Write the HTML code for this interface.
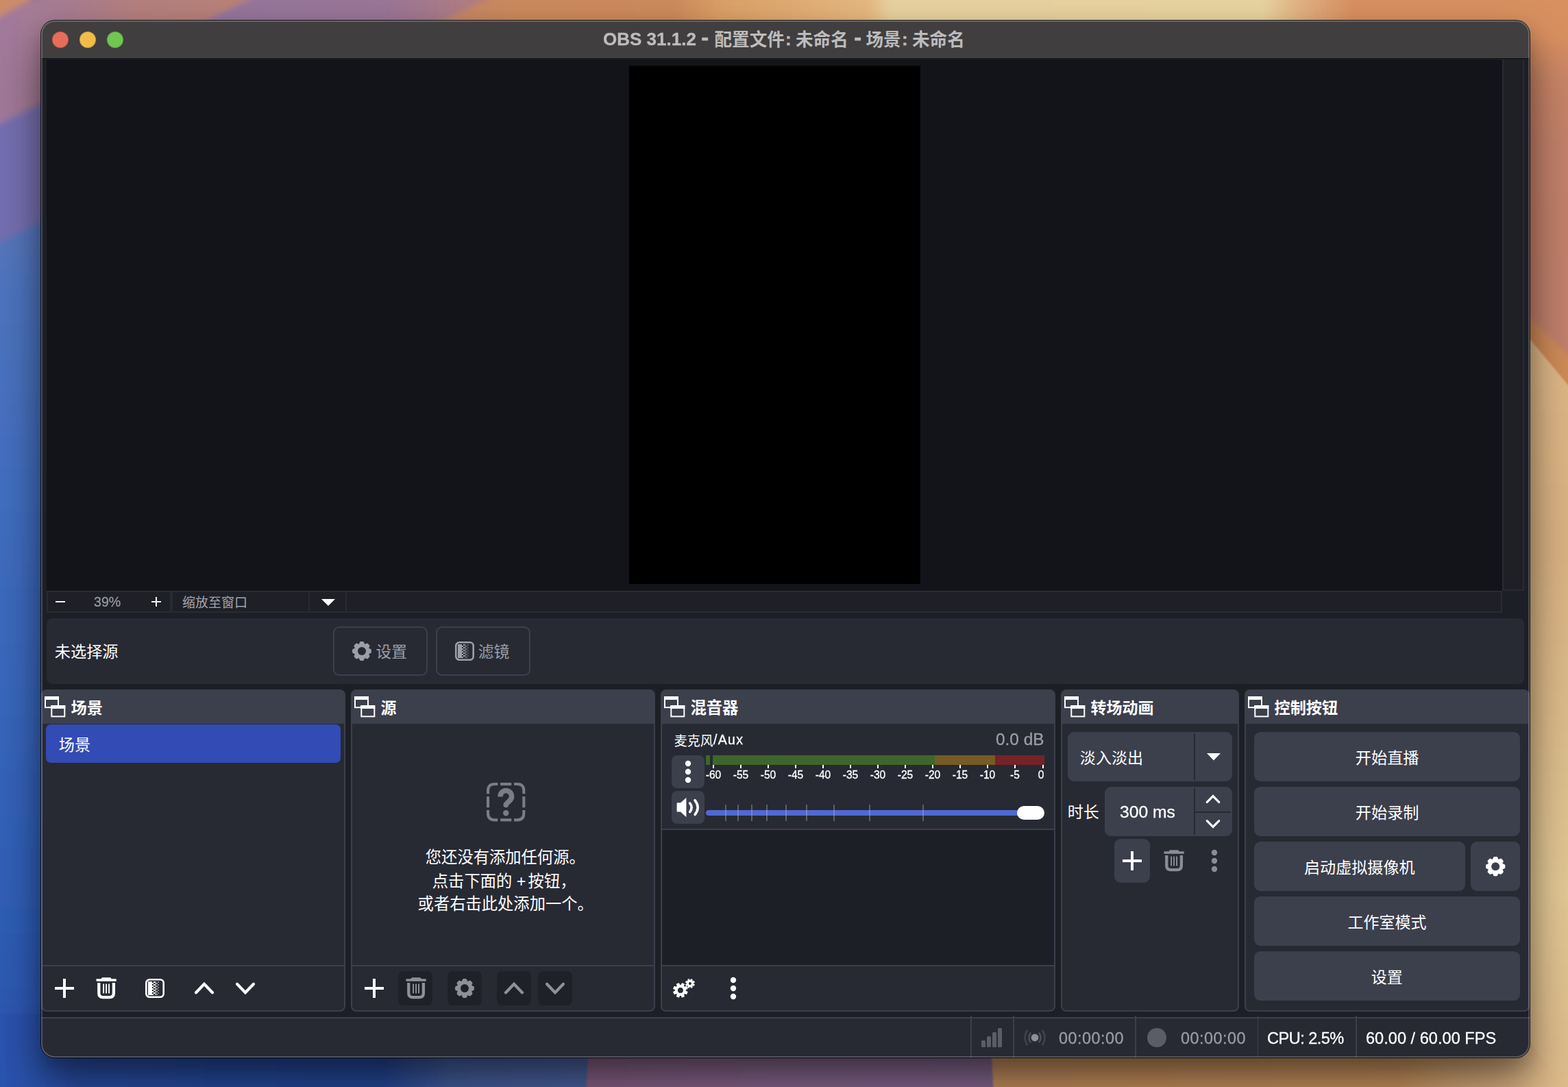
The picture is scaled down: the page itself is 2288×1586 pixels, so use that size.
<!DOCTYPE html>
<html lang="zh-CN"><head><meta charset="utf-8"><title>OBS 31.1.2</title>
<style>
html,body{margin:0;padding:0;background:#2a52a8;}
body{width:2288px;height:1586px;overflow:hidden;font-family:"Liberation Sans",sans-serif;}
#screen{position:relative;width:2288px;height:1586px;overflow:hidden;}
#screen div,#screen span,#screen svg{position:absolute;box-sizing:border-box;}
.t{line-height:1em;white-space:pre;will-change:transform;-webkit-text-stroke:0.3px;}
.cj,.ic{overflow:visible;pointer-events:none;}
.cj text{font-family:"Liberation Sans","Noto Sans CJK SC",sans-serif;white-space:pre;}
.tb{-webkit-text-stroke:0.35px #bdbcbd;}
</style></head>
<body>
<div id="screen">
<!-- desktop wallpaper -->
<svg class="wall" style="left:0;top:0" width="2288" height="1586" viewBox="0 0 2288 1586"><defs><filter id="wb" x="-5%" y="-5%" width="110%" height="110%"><feGaussianBlur stdDeviation="4.5"/></filter><filter id="wc" x="-5%" y="-5%" width="110%" height="110%"><feGaussianBlur stdDeviation="1.2"/></filter><linearGradient id="wl" gradientUnits="userSpaceOnUse" x1="0" y1="300" x2="0" y2="1586"><stop offset="0" stop-color="#5c78bc"/><stop offset="0.09" stop-color="#4f76c0"/><stop offset="0.31" stop-color="#4370c2"/><stop offset="0.54" stop-color="#3a68be"/><stop offset="0.78" stop-color="#3060b8"/><stop offset="1" stop-color="#2b55b0"/></linearGradient><linearGradient id="wp" gradientUnits="userSpaceOnUse" x1="0" y1="0" x2="700" y2="0"><stop offset="0" stop-color="#7470b4"/><stop offset="0.09" stop-color="#7a72b0"/><stop offset="0.51" stop-color="#96769c"/><stop offset="0.8" stop-color="#9a7698"/><stop offset="1" stop-color="#b47e80"/></linearGradient><linearGradient id="wm" gradientUnits="userSpaceOnUse" x1="0" y1="0" x2="340" y2="0"><stop offset="0" stop-color="#a27a9c"/><stop offset="0.29" stop-color="#a87c90"/><stop offset="0.59" stop-color="#b4807e"/><stop offset="1" stop-color="#ba8278"/></linearGradient><linearGradient id="wt" gradientUnits="userSpaceOnUse" x1="640" y1="0" x2="2288" y2="0"><stop offset="0" stop-color="#c4866a"/><stop offset="0.07" stop-color="#cc8a5c"/><stop offset="0.21" stop-color="#cd8b5c"/><stop offset="0.25" stop-color="#dca068"/><stop offset="0.38" stop-color="#e6b880"/><stop offset="0.4" stop-color="#e8d2a0"/><stop offset="0.73" stop-color="#e8d4a0"/><stop offset="0.76" stop-color="#e2b484"/><stop offset="0.81" stop-color="#d89060"/><stop offset="1" stop-color="#d99060"/></linearGradient><linearGradient id="wr" gradientUnits="userSpaceOnUse" x1="0" y1="0" x2="0" y2="700"><stop offset="0" stop-color="#d89060"/><stop offset="0.09" stop-color="#d68e60"/><stop offset="0.17" stop-color="#ca8668"/><stop offset="0.31" stop-color="#c4826c"/><stop offset="1" stop-color="#c0806e"/></linearGradient><linearGradient id="wr2" gradientUnits="userSpaceOnUse" x1="0" y1="480" x2="0" y2="1586"><stop offset="0" stop-color="#e2ba8a"/><stop offset="0.29" stop-color="#dcb484"/><stop offset="0.56" stop-color="#e0c08e"/><stop offset="0.74" stop-color="#e4ca96"/><stop offset="1" stop-color="#e0bc8c"/></linearGradient><linearGradient id="wb1" gradientUnits="userSpaceOnUse" x1="0" y1="0" x2="857" y2="0"><stop offset="0" stop-color="#2c54b0"/><stop offset="0.14" stop-color="#2a50a8"/><stop offset="0.65" stop-color="#26489a"/><stop offset="0.77" stop-color="#4560a0"/><stop offset="1" stop-color="#4c64a0"/></linearGradient><linearGradient id="wb2" gradientUnits="userSpaceOnUse" x1="857" y1="0" x2="1448" y2="0"><stop offset="0" stop-color="#8a6488"/><stop offset="0.41" stop-color="#89678f"/><stop offset="1" stop-color="#866893"/></linearGradient><linearGradient id="wb3" gradientUnits="userSpaceOnUse" x1="1448" y1="0" x2="2288" y2="0"><stop offset="0" stop-color="#c8915f"/><stop offset="0.7" stop-color="#cc9560"/><stop offset="0.84" stop-color="#d8ae7c"/><stop offset="1" stop-color="#e2be8e"/></linearGradient></defs><g filter="url(#wb)"><polygon points="-40,280 200,280 200,1640 -40,1640" fill="url(#wl)"/><polygon points="-40,373 -40,201 362,0 402,-20 746,-20 706,0 0,353" fill="url(#wp)"/><polygon points="-40,201 -40,44 0,24 44,0 84,-20 402,-20 362,0 0,181" fill="url(#wm)"/><polygon points="-40,-40 90,-40 44,0 0,24 -40,46" fill="#cc8c68"/><polygon points="706,0 746,-20 2330,-20 2330,120 466,120" fill="url(#wt)"/><polygon points="2110,60 2330,60 2330,700 2110,700" fill="url(#wr)"/><polygon points="2200,434 2330,557 2330,640 2200,480" fill="#d08c58"/></g><g filter="url(#wc)"><polygon points="2110,348 2330,612 2330,1640 2110,1640" fill="url(#wr2)"/><polygon points="-40,1480 861,1480 853,1640 -40,1640" fill="url(#wb1)"/><polygon points="861,1480 1444,1480 1452,1640 853,1640" fill="url(#wb2)"/><polygon points="1444,1480 2200,1480 2330,1640 1452,1640" fill="url(#wb3)"/></g></svg>
<!-- OBS window -->
<div class="win" style="left:60px;top:30px;width:2172px;height:1513px;background:#1d1f26;border-radius:20px;box-shadow:0 0 0 1px rgba(0,0,0,.8),0 40px 70px 4px rgba(0,0,0,.40),0 16px 30px 0 rgba(0,0,0,.24);"></div>
<div class="titlebar" style="left:60px;top:30px;width:2172px;height:56px;background:#403e3f;border-radius:20px 20px 0 0;border-bottom:1.5px solid #0b0b0c;"></div>
<div style="left:75.8px;top:45.7px;width:24.4px;height:24.4px;background:#e76d5b;border-radius:50%;box-shadow:inset 0 0 0 1px rgba(0,0,0,.16);"></div>
<div style="left:115.8px;top:45.7px;width:24.4px;height:24.4px;background:#f1bd4a;border-radius:50%;box-shadow:inset 0 0 0 1px rgba(0,0,0,.16);"></div>
<div style="left:155.8px;top:45.7px;width:24.4px;height:24.4px;background:#6fc751;border-radius:50%;box-shadow:inset 0 0 0 1px rgba(0,0,0,.16);"></div>
<span class="t tb" style="top:44.19px;font-size:26px;color:#bdbcbd;font-weight:700;left:879.6px;">OBS 31.1.2</span>
<span class="t" style="top:37.12px;font-size:34px;color:#bdbcbd;font-weight:700;left:1023.4px;">-</span>
<svg class="cj" role="img" aria-label="配置文件" style="left:1042px;top:43px" width="104" height="28" viewBox="0 0 104 28"><text x="0.5" y="24.2" font-size="25.6" font-weight="700" fill="#bdbcbd">配置文件</text></svg>
<span class="t tb" style="top:44.19px;font-size:26px;color:#bdbcbd;font-weight:700;left:1146.2px;">:</span>
<svg class="cj" role="img" aria-label="未命名" style="left:1161px;top:43px" width="76" height="28" viewBox="0 0 76 28"><text x="0" y="24.3" font-size="25.6" font-weight="700" fill="#bdbcbd">未命名</text></svg>
<span class="t" style="top:37.12px;font-size:34px;color:#bdbcbd;font-weight:700;left:1245.6px;">-</span>
<svg class="cj" role="img" aria-label="场景" style="left:1263px;top:44px" width="52" height="26" viewBox="0 0 52 26"><text x="0.5" y="22.9" font-size="25.6" font-weight="700" fill="#bdbcbd">场景</text></svg>
<span class="t tb" style="top:44.19px;font-size:26px;color:#bdbcbd;font-weight:700;left:1316.4px;">:</span>
<svg class="cj" role="img" aria-label="未命名" style="left:1330px;top:43px" width="77" height="28" viewBox="0 0 77 28"><text x="1" y="24.3" font-size="25.6" font-weight="700" fill="#bdbcbd">未命名</text></svg>
<!-- preview -->
<div style="left:68px;top:87px;width:2124px;height:775px;background:#13141a;"></div>
<div style="left:918px;top:96px;width:425px;height:756px;background:#000;"></div>
<div style="left:2192px;top:87px;width:32px;height:775px;background:#1e2026;border:2px solid #292b34;border-top:0;"></div>
<div style="left:504px;top:862px;width:1688px;height:32px;background:#1e2026;border:2px solid #292b34;border-left:0;"></div>
<div style="left:68px;top:862px;width:182px;height:32px;background:#1e2026;border:2px solid #292b34;"></div>
<div style="left:250px;top:862px;width:202px;height:32px;background:#1e2026;border:2px solid #292b34;"></div>
<div style="left:450px;top:862px;width:56px;height:32px;background:#1e2026;border:2px solid #292b34;"></div>
<div style="left:80.7px;top:876.6px;width:14.4px;height:2.7px;background:#f2f2f4;"></div>
<div style="left:221px;top:876.6px;width:14.2px;height:2.7px;background:#f2f2f4;"></div>
<div style="left:226.75px;top:870.9px;width:2.7px;height:14.3px;background:#f2f2f4;"></div>
<span class="t" style="top:869.41px;font-size:19.6px;color:#9697a0;left:137.2px;">39%</span>
<svg class="cj" role="img" aria-label="缩放至窗口" style="left:265px;top:868px" width="96" height="21" viewBox="0 0 96 21"><text x="1" y="18.2" font-size="19" fill="#a3a5ae">缩放至窗口</text></svg>
<svg class="ic" style="left:469px;top:874px" width="20" height="10" viewBox="0 0 20 10"><path d="M0 0H20L10 10Z" fill="#fff"/></svg>
<!-- source context bar -->
<div style="left:68px;top:902px;width:2156px;height:96px;background:#272a33;border-radius:8px;"></div>
<svg class="cj" role="img" aria-label="未选择源" style="left:79px;top:938px" width="94" height="25" viewBox="0 0 94 25"><text x="0.8" y="21.4" font-size="23.2" fill="#ffffff">未选择源</text></svg>
<div style="left:486px;top:914px;width:138px;height:72px;border:2px solid #3c3f4c;border-radius:9px;"></div>
<div style="left:636px;top:914px;width:138px;height:72px;border:2px solid #3c3f4c;border-radius:9px;"></div>
<svg class="ic" style="left:513px;top:935px" width="30" height="30" viewBox="-15 -15 30 30"><path d="M-3.07 -8.91 L-1.63 -12.39 L1.63 -12.39 L3.07 -8.91 L4.13 -8.47 L7.61 -9.92 L9.92 -7.61 L8.47 -4.13 L8.91 -3.07 L12.39 -1.63 L12.39 1.63 L8.91 3.07 L8.47 4.13 L9.92 7.61 L7.61 9.92 L4.13 8.47 L3.07 8.91 L1.63 12.39 L-1.63 12.39 L-3.07 8.91 L-4.13 8.47 L-7.61 9.92 L-9.92 7.61 L-8.47 4.13 L-8.91 3.07 L-12.39 1.63 L-12.39 -1.63 L-8.91 -3.07 L-8.47 -4.13 L-9.92 -7.61 L-7.61 -9.92 L-4.13 -8.47Z" fill="#9d9fa8" stroke="#9d9fa8" stroke-width="3.0" stroke-linejoin="round"/><circle r="6" fill="#272a33"/></svg>
<svg class="cj" role="img" aria-label="设置" style="left:548px;top:938px" width="46" height="24" viewBox="0 0 46 24"><text x="0.5" y="21" font-size="22.7" fill="#9d9fa8">设置</text></svg>
<svg class="ic" style="left:664px;top:936px" width="28" height="28" viewBox="0 0 28 28"><rect x="1.3" y="1.3" width="25.4" height="25.4" rx="5" fill="none" stroke="#9d9fa8" stroke-width="2.6"/><rect x="4" y="4" width="6" height="20" fill="#9d9fa8"/><rect x="12" y="4" width="2" height="2" fill="#9d9fa8"/><rect x="10" y="6" width="2" height="2" fill="#9d9fa8"/><rect x="12" y="8" width="2" height="2" fill="#9d9fa8"/><rect x="10" y="10" width="2" height="2" fill="#9d9fa8"/><rect x="12" y="12" width="2" height="2" fill="#9d9fa8"/><rect x="10" y="14" width="2" height="2" fill="#9d9fa8"/><rect x="12" y="16" width="2" height="2" fill="#9d9fa8"/><rect x="10" y="18" width="2" height="2" fill="#9d9fa8"/><rect x="12" y="20" width="2" height="2" fill="#9d9fa8"/><rect x="10" y="22" width="2" height="2" fill="#9d9fa8"/><rect x="14" y="4" width="2" height="20" fill="#9d9fa8" opacity=".5"/><rect x="18" y="4" width="2" height="2" fill="#9d9fa8" opacity="0.4"/><rect x="16" y="6" width="2" height="2" fill="#9d9fa8" opacity="0.5"/><rect x="18" y="8" width="2" height="2" fill="#9d9fa8" opacity="0.4"/><rect x="16" y="10" width="2" height="2" fill="#9d9fa8" opacity="0.5"/><rect x="18" y="12" width="2" height="2" fill="#9d9fa8" opacity="0.4"/><rect x="16" y="14" width="2" height="2" fill="#9d9fa8" opacity="0.5"/><rect x="18" y="16" width="2" height="2" fill="#9d9fa8" opacity="0.4"/><rect x="16" y="18" width="2" height="2" fill="#9d9fa8" opacity="0.5"/><rect x="18" y="20" width="2" height="2" fill="#9d9fa8" opacity="0.4"/><rect x="16" y="22" width="2" height="2" fill="#9d9fa8" opacity="0.5"/></svg>
<svg class="cj" role="img" aria-label="滤镜" style="left:697px;top:938px" width="47" height="25" viewBox="0 0 47 25"><text x="0.8" y="21.4" font-size="22.8" fill="#9d9fa8">滤镜</text></svg>
<!-- dock: 场景 -->
<div class="dock" style="left:60px;top:1050px;width:444px;height:426px;background:#272a33;border:2px solid #3c3f4c;border-top:0;border-radius:0 0 8px 8px;"></div>
<div class="dock-title" style="left:60px;top:1006px;width:444px;height:50px;background:#3c3f4c;border-radius:8px 8px 0 0;"></div>
<svg class="ic" style="left:64.6px;top:1016.4px" width="30.6" height="30.6" viewBox="0 0 30.6 30.6"><rect x="1" y="1" width="19" height="15.2" fill="#3c3f4c" stroke="#fff" stroke-width="2"/><rect x="0" y="0" width="21" height="5" fill="#fff"/><rect x="10.3" y="14" width="19" height="15.4" fill="#3c3f4c" stroke="#fff" stroke-width="2"/><rect x="9.3" y="13" width="21" height="5" fill="#fff"/></svg>
<svg class="cj" role="img" aria-label="场景" style="left:103px;top:1020px" width="47" height="24" viewBox="0 0 47 24"><text x="0.5" y="21" font-size="23.2" font-weight="700" fill="#ffffff">场景</text></svg>
<div style="left:62px;top:1408px;width:440px;height:2px;background:#3c3f4c;"></div>
<div style="left:67px;top:1057px;width:430px;height:56px;background:#334bb4;border-radius:7px;"></div>
<svg class="cj" role="img" aria-label="场景" style="left:85px;top:1073px" width="47" height="25" viewBox="0 0 47 25"><text x="0.8" y="21.5" font-size="23.1" fill="#ffffff">场景</text></svg>
<div style="left:79.8px;top:1439.8px;width:28.4px;height:4.4px;background:#fff;"></div>
<div style="left:91.8px;top:1427.8px;width:4.4px;height:28.4px;background:#fff;"></div>
<svg class="ic" style="left:139.9px;top:1426.4px" width="30.2" height="31.2" viewBox="0 0 31 32"><path d="M7.6 2.3 L9.3 0.2 H21.7 L23.4 2.3 H29.6 Q30.6 2.3 30.6 3.3 V4.8 Q30.6 5.8 29.6 5.8 H1.4 Q0.4 5.8 0.4 4.8 V3.3 Q0.4 2.3 1.4 2.3 Z" fill="#fff"/><path d="M4.4 8.2 V23.6 Q4.4 29.8 10.6 29.8 H20.4 Q26.6 29.8 26.6 23.6 V8.2" fill="none" stroke="#fff" stroke-width="4.4"/><rect x="10.4" y="9.8" width="2" height="14.2" fill="#fff"/><rect x="14.5" y="9.8" width="2" height="14.2" fill="#fff"/><rect x="18.6" y="9.8" width="2" height="14.2" fill="#fff"/></svg>
<svg class="ic" style="left:212px;top:1428px" width="28" height="28" viewBox="0 0 28 28"><rect x="1.3" y="1.3" width="25.4" height="25.4" rx="5" fill="none" stroke="#fff" stroke-width="2.6"/><rect x="4" y="4" width="6" height="20" fill="#fff"/><rect x="12" y="4" width="2" height="2" fill="#fff"/><rect x="10" y="6" width="2" height="2" fill="#fff"/><rect x="12" y="8" width="2" height="2" fill="#fff"/><rect x="10" y="10" width="2" height="2" fill="#fff"/><rect x="12" y="12" width="2" height="2" fill="#fff"/><rect x="10" y="14" width="2" height="2" fill="#fff"/><rect x="12" y="16" width="2" height="2" fill="#fff"/><rect x="10" y="18" width="2" height="2" fill="#fff"/><rect x="12" y="20" width="2" height="2" fill="#fff"/><rect x="10" y="22" width="2" height="2" fill="#fff"/><rect x="14" y="4" width="2" height="20" fill="#fff" opacity=".5"/><rect x="18" y="4" width="2" height="2" fill="#fff" opacity="0.4"/><rect x="16" y="6" width="2" height="2" fill="#fff" opacity="0.5"/><rect x="18" y="8" width="2" height="2" fill="#fff" opacity="0.4"/><rect x="16" y="10" width="2" height="2" fill="#fff" opacity="0.5"/><rect x="18" y="12" width="2" height="2" fill="#fff" opacity="0.4"/><rect x="16" y="14" width="2" height="2" fill="#fff" opacity="0.5"/><rect x="18" y="16" width="2" height="2" fill="#fff" opacity="0.4"/><rect x="16" y="18" width="2" height="2" fill="#fff" opacity="0.5"/><rect x="18" y="20" width="2" height="2" fill="#fff" opacity="0.4"/><rect x="16" y="22" width="2" height="2" fill="#fff" opacity="0.5"/></svg>
<svg class="ic" style="left:277.8px;top:1428px" width="40" height="28" viewBox="-20 -14 40 28"><path d="M-12 6.25 L0 -6.25 L12 6.25" fill="none" stroke="#fff" stroke-width="4.2" stroke-linecap="round" stroke-linejoin="miter"/></svg>
<svg class="ic" style="left:337.9px;top:1428px" width="40" height="28" viewBox="-20 -14 40 28"><path d="M-12 -6.25 L0 6.25 L12 -6.25" fill="none" stroke="#fff" stroke-width="4.2" stroke-linecap="round" stroke-linejoin="miter"/></svg>
<!-- dock: 源 -->
<div class="dock" style="left:512px;top:1050px;width:444px;height:426px;background:#272a33;border:2px solid #3c3f4c;border-top:0;border-radius:0 0 8px 8px;"></div>
<div class="dock-title" style="left:512px;top:1006px;width:444px;height:50px;background:#3c3f4c;border-radius:8px 8px 0 0;"></div>
<svg class="ic" style="left:516.6px;top:1016.4px" width="30.6" height="30.6" viewBox="0 0 30.6 30.6"><rect x="1" y="1" width="19" height="15.2" fill="#3c3f4c" stroke="#fff" stroke-width="2"/><rect x="0" y="0" width="21" height="5" fill="#fff"/><rect x="10.3" y="14" width="19" height="15.4" fill="#3c3f4c" stroke="#fff" stroke-width="2"/><rect x="9.3" y="13" width="21" height="5" fill="#fff"/></svg>
<svg class="cj" role="img" aria-label="源" style="left:555px;top:1020px" width="24" height="24" viewBox="0 0 24 24"><text x="0.5" y="20.9" font-size="23" font-weight="700" fill="#ffffff">源</text></svg>
<div style="left:514px;top:1408px;width:440px;height:2px;background:#3c3f4c;"></div>
<svg class="ic" role="img" aria-label="?" style="left:709.9px;top:1141.9px" width="56.4" height="56.4" viewBox="0 0 56.4 56.4"><path d="M2.05 16.3 V11.55 Q2.05 2.05 11.55 2.05 H16.3" fill="none" stroke="#7b7c86" stroke-width="4.1"/><path d="M40.1 2.05 H44.85 Q54.35 2.05 54.35 11.55 V16.3" fill="none" stroke="#7b7c86" stroke-width="4.1"/><path d="M54.35 40.1 V44.85 Q54.35 54.35 44.85 54.35 H40.1" fill="none" stroke="#7b7c86" stroke-width="4.1"/><path d="M16.3 54.35 H11.55 Q2.05 54.35 2.05 44.85 V40.1" fill="none" stroke="#7b7c86" stroke-width="4.1"/><path d="M20.1 2.05 L36.3 2.05" fill="none" stroke="#7b7c86" stroke-width="4.1"/><path d="M20.1 54.35 L36.3 54.35" fill="none" stroke="#7b7c86" stroke-width="4.1"/><path d="M2.05 20.1 L2.05 36.3" fill="none" stroke="#7b7c86" stroke-width="4.1"/><path d="M54.35 20.1 L54.35 36.3" fill="none" stroke="#7b7c86" stroke-width="4.1"/><path d="M20 20.5 V19.9 A8.3 8.3 0 1 1 34.84 25.01 L29.5 30.3 Q28.3 31.3 28.3 32.5" fill="none" stroke="#7b7c86" stroke-width="7.5" stroke-linecap="butt" stroke-linejoin="round"/><circle cx="28.3" cy="32.5" r="3.75" fill="#7b7c86"/><circle cx="28.3" cy="44.2" r="4.2" fill="#7b7c86"/></svg>
<svg class="cj" role="img" aria-label="您还没有添加任何源。" style="left:620px;top:1238px" width="220" height="24" viewBox="0 0 220 24"><text x="0.8" y="21.3" font-size="23.3" fill="#ffffff">您还没有添加任何源。</text></svg>
<svg class="cj" role="img" aria-label="点击下面的 + 按钮，" style="left:630px;top:1272px" width="197" height="25" viewBox="0 0 197 25"><text x="0.8" y="21.5" font-size="23.3" fill="#ffffff">点击下面的 + <tspan x="140.6">按钮，</tspan></text></svg>
<svg class="cj" role="img" aria-label="或者右击此处添加一个。" style="left:609px;top:1305px" width="243" height="25" viewBox="0 0 243 25"><text x="0.6" y="22" font-size="23.3" fill="#ffffff">或者右击此处添加一个。</text></svg>
<div style="left:532px;top:1439.8px;width:28.4px;height:4.4px;background:#fff;"></div>
<div style="left:544px;top:1427.8px;width:4.4px;height:28.4px;background:#fff;"></div>
<div style="left:581px;top:1417px;width:50px;height:50px;background:#1f2128;border-radius:8px;"></div>
<div style="left:653px;top:1417px;width:50px;height:50px;background:#1f2128;border-radius:8px;"></div>
<div style="left:725px;top:1417px;width:50px;height:50px;background:#1f2128;border-radius:8px;"></div>
<div style="left:785px;top:1417px;width:50px;height:50px;background:#1f2128;border-radius:8px;"></div>
<svg class="ic" style="left:591.7px;top:1426.4px" width="30.2" height="31.2" viewBox="0 0 31 32"><path d="M7.6 2.3 L9.3 0.2 H21.7 L23.4 2.3 H29.6 Q30.6 2.3 30.6 3.3 V4.8 Q30.6 5.8 29.6 5.8 H1.4 Q0.4 5.8 0.4 4.8 V3.3 Q0.4 2.3 1.4 2.3 Z" fill="#8f9099"/><path d="M4.4 8.2 V23.6 Q4.4 29.8 10.6 29.8 H20.4 Q26.6 29.8 26.6 23.6 V8.2" fill="none" stroke="#8f9099" stroke-width="4.4"/><rect x="10.4" y="9.8" width="2" height="14.2" fill="#8f9099"/><rect x="14.5" y="9.8" width="2" height="14.2" fill="#8f9099"/><rect x="18.6" y="9.8" width="2" height="14.2" fill="#8f9099"/></svg>
<svg class="ic" style="left:662.8px;top:1427px" width="30" height="30" viewBox="-15 -15 30 30"><path d="M-3.07 -8.91 L-1.63 -12.39 L1.63 -12.39 L3.07 -8.91 L4.13 -8.47 L7.61 -9.92 L9.92 -7.61 L8.47 -4.13 L8.91 -3.07 L12.39 -1.63 L12.39 1.63 L8.91 3.07 L8.47 4.13 L9.92 7.61 L7.61 9.92 L4.13 8.47 L3.07 8.91 L1.63 12.39 L-1.63 12.39 L-3.07 8.91 L-4.13 8.47 L-7.61 9.92 L-9.92 7.61 L-8.47 4.13 L-8.91 3.07 L-12.39 1.63 L-12.39 -1.63 L-8.91 -3.07 L-8.47 -4.13 L-9.92 -7.61 L-7.61 -9.92 L-4.13 -8.47Z" fill="#8f9099" stroke="#8f9099" stroke-width="3.0" stroke-linejoin="round"/><circle r="6" fill="#1f2128"/></svg>
<svg class="ic" style="left:730px;top:1428px" width="40" height="28" viewBox="-20 -14 40 28"><path d="M-12 6.25 L0 -6.25 L12 6.25" fill="none" stroke="#8f9099" stroke-width="4.2" stroke-linecap="round" stroke-linejoin="miter"/></svg>
<svg class="ic" style="left:790px;top:1428px" width="40" height="28" viewBox="-20 -14 40 28"><path d="M-12 -6.25 L0 6.25 L12 -6.25" fill="none" stroke="#8f9099" stroke-width="4.2" stroke-linecap="round" stroke-linejoin="miter"/></svg>
<!-- dock: 混音器 -->
<div class="dock" style="left:964px;top:1050px;width:576px;height:426px;background:#272a33;border:2px solid #3c3f4c;border-top:0;border-radius:0 0 8px 8px;"></div>
<div class="dock-title" style="left:964px;top:1006px;width:576px;height:50px;background:#3c3f4c;border-radius:8px 8px 0 0;"></div>
<svg class="ic" style="left:968.6px;top:1016.4px" width="30.6" height="30.6" viewBox="0 0 30.6 30.6"><rect x="1" y="1" width="19" height="15.2" fill="#3c3f4c" stroke="#fff" stroke-width="2"/><rect x="0" y="0" width="21" height="5" fill="#fff"/><rect x="10.3" y="14" width="19" height="15.4" fill="#3c3f4c" stroke="#fff" stroke-width="2"/><rect x="9.3" y="13" width="21" height="5" fill="#fff"/></svg>
<svg class="cj" role="img" aria-label="混音器" style="left:1007px;top:1019px" width="71" height="25" viewBox="0 0 71 25"><text x="0.5" y="22" font-size="23.3" font-weight="700" fill="#ffffff">混音器</text></svg>
<div style="left:966px;top:1408px;width:572px;height:2px;background:#3c3f4c;"></div>
<div style="left:966px;top:1210px;width:572px;height:198px;background:#1d1f26;"></div>
<div style="left:966px;top:1208.8px;width:572px;height:2px;background:#3c3f4c;"></div>
<svg class="cj" role="img" aria-label="麦克风" style="left:983px;top:1070px" width="58" height="21" viewBox="0 0 58 21"><text x="0.8" y="17.9" font-size="19" fill="#ffffff">麦克风</text></svg>
<span class="t" style="top:1070.29px;font-size:19.5px;color:#ffffff;letter-spacing:1.35px;left:1041.2px;">/Aux</span>
<span class="t" style="top:1067.15px;font-size:24.4px;color:#9c9da6;right:764px;">0.0 dB</span>
<div style="left:1030px;top:1102px;width:6px;height:14px;background:#3e662a;"></div>
<div style="left:1040px;top:1102px;width:484px;height:14px;background:linear-gradient(90deg,#3e662a 0,#3e662a 324px,#745c24 324px,#745c24 412px,#742428 412px);"></div>
<div style="left:1040px;top:1116px;width:2px;height:4.6px;background:#fff;"></div>
<span class="t" style="top:1122.59px;font-size:15.6px;color:#ffffff;left:891px;width:300px;text-align:center;">-60</span>
<div style="left:1080px;top:1116px;width:2px;height:4.6px;background:#fff;"></div>
<span class="t" style="top:1122.59px;font-size:15.6px;color:#ffffff;left:931px;width:300px;text-align:center;">-55</span>
<div style="left:1120px;top:1116px;width:2px;height:4.6px;background:#fff;"></div>
<span class="t" style="top:1122.59px;font-size:15.6px;color:#ffffff;left:971px;width:300px;text-align:center;">-50</span>
<div style="left:1160px;top:1116px;width:2px;height:4.6px;background:#fff;"></div>
<span class="t" style="top:1122.59px;font-size:15.6px;color:#ffffff;left:1011px;width:300px;text-align:center;">-45</span>
<div style="left:1200px;top:1116px;width:2px;height:4.6px;background:#fff;"></div>
<span class="t" style="top:1122.59px;font-size:15.6px;color:#ffffff;left:1051px;width:300px;text-align:center;">-40</span>
<div style="left:1240px;top:1116px;width:2px;height:4.6px;background:#fff;"></div>
<span class="t" style="top:1122.59px;font-size:15.6px;color:#ffffff;left:1091px;width:300px;text-align:center;">-35</span>
<div style="left:1280px;top:1116px;width:2px;height:4.6px;background:#fff;"></div>
<span class="t" style="top:1122.59px;font-size:15.6px;color:#ffffff;left:1131px;width:300px;text-align:center;">-30</span>
<div style="left:1320px;top:1116px;width:2px;height:4.6px;background:#fff;"></div>
<span class="t" style="top:1122.59px;font-size:15.6px;color:#ffffff;left:1171px;width:300px;text-align:center;">-25</span>
<div style="left:1360px;top:1116px;width:2px;height:4.6px;background:#fff;"></div>
<span class="t" style="top:1122.59px;font-size:15.6px;color:#ffffff;left:1211px;width:300px;text-align:center;">-20</span>
<div style="left:1400px;top:1116px;width:2px;height:4.6px;background:#fff;"></div>
<span class="t" style="top:1122.59px;font-size:15.6px;color:#ffffff;left:1251px;width:300px;text-align:center;">-15</span>
<div style="left:1440px;top:1116px;width:2px;height:4.6px;background:#fff;"></div>
<span class="t" style="top:1122.59px;font-size:15.6px;color:#ffffff;left:1291px;width:300px;text-align:center;">-10</span>
<div style="left:1480px;top:1116px;width:2px;height:4.6px;background:#fff;"></div>
<span class="t" style="top:1122.59px;font-size:15.6px;color:#ffffff;left:1331px;width:300px;text-align:center;">-5</span>
<div style="left:1521px;top:1116px;width:2px;height:4.6px;background:#fff;"></div>
<span class="t" style="top:1122.59px;font-size:15.6px;color:#ffffff;left:1368.6px;width:300px;text-align:center;">0</span>
<div style="left:980px;top:1102px;width:48px;height:48px;background:#3c3f4c;border-radius:8px;"></div>
<svg class="ic" style="left:994px;top:1104px" width="20" height="44" viewBox="0 0 20 44"><circle cx="10" cy="10" r="4.2" fill="#fff"/><circle cx="10" cy="22" r="4.2" fill="#fff"/><circle cx="10" cy="34" r="4.2" fill="#fff"/></svg>
<div style="left:980px;top:1154px;width:48px;height:48px;background:#3c3f4c;border-radius:8px;"></div>
<svg class="ic" style="left:987.2px;top:1164px" width="34" height="29" viewBox="0 0 34 29"><path d="M0.6 8.4 Q0.6 7.2 1.8 7.2 H6 L14.4 0 V28.2 L6 20.6 H1.8 Q0.6 20.6 0.6 19.4 Z" fill="#fff"/><path d="M19.6 7.8 Q24.8 14 19.6 20.6" fill="none" stroke="#fff" stroke-width="3.6" stroke-linecap="round"/><path d="M27 3.6 Q35.4 14 27 24.6" fill="none" stroke="#fff" stroke-width="3.6" stroke-linecap="round"/></svg>
<div style="left:1058px;top:1174px;width:2px;height:24px;background:#5d5f6a;"></div>
<div style="left:1076px;top:1174px;width:2px;height:24px;background:#5d5f6a;"></div>
<div style="left:1096px;top:1174px;width:2px;height:24px;background:#5d5f6a;"></div>
<div style="left:1118px;top:1174px;width:2px;height:24px;background:#5d5f6a;"></div>
<div style="left:1146px;top:1174px;width:2px;height:24px;background:#5d5f6a;"></div>
<div style="left:1176px;top:1174px;width:2px;height:24px;background:#5d5f6a;"></div>
<div style="left:1216px;top:1174px;width:2px;height:24px;background:#5d5f6a;"></div>
<div style="left:1268px;top:1174px;width:2px;height:24px;background:#5d5f6a;"></div>
<div style="left:1346px;top:1174px;width:2px;height:24px;background:#5d5f6a;"></div>
<div style="left:1030px;top:1182px;width:480px;height:8px;background:#4f69d3;border-radius:4px;"></div>
<div style="left:1058px;top:1182px;width:2px;height:8px;background:rgba(125,140,215,.8);"></div>
<div style="left:1076px;top:1182px;width:2px;height:8px;background:rgba(125,140,215,.8);"></div>
<div style="left:1096px;top:1182px;width:2px;height:8px;background:rgba(125,140,215,.8);"></div>
<div style="left:1118px;top:1182px;width:2px;height:8px;background:rgba(125,140,215,.8);"></div>
<div style="left:1146px;top:1182px;width:2px;height:8px;background:rgba(125,140,215,.8);"></div>
<div style="left:1176px;top:1182px;width:2px;height:8px;background:rgba(125,140,215,.8);"></div>
<div style="left:1216px;top:1182px;width:2px;height:8px;background:rgba(125,140,215,.8);"></div>
<div style="left:1268px;top:1182px;width:2px;height:8px;background:rgba(125,140,215,.8);"></div>
<div style="left:1346px;top:1182px;width:2px;height:8px;background:rgba(125,140,215,.8);"></div>
<div style="left:1484px;top:1176px;width:40px;height:20px;background:#fff;border-radius:10px;"></div>
<svg class="ic" style="left:980.8px;top:1433.1px" width="23.8" height="23.8" viewBox="-11.9 -11.9 23.8 23.8"><circle r="8.07" fill="#fff"/><rect x="-2.29" y="-10.9" width="4.58" height="5.45" rx="0.65" fill="#fff" transform="rotate(22.5)"/><rect x="-2.29" y="-10.9" width="4.58" height="5.45" rx="0.65" fill="#fff" transform="rotate(67.5)"/><rect x="-2.29" y="-10.9" width="4.58" height="5.45" rx="0.65" fill="#fff" transform="rotate(112.5)"/><rect x="-2.29" y="-10.9" width="4.58" height="5.45" rx="0.65" fill="#fff" transform="rotate(157.5)"/><rect x="-2.29" y="-10.9" width="4.58" height="5.45" rx="0.65" fill="#fff" transform="rotate(202.5)"/><rect x="-2.29" y="-10.9" width="4.58" height="5.45" rx="0.65" fill="#fff" transform="rotate(247.5)"/><rect x="-2.29" y="-10.9" width="4.58" height="5.45" rx="0.65" fill="#fff" transform="rotate(292.5)"/><rect x="-2.29" y="-10.9" width="4.58" height="5.45" rx="0.65" fill="#fff" transform="rotate(337.5)"/><circle r="3.95" fill="#272a33"/></svg>
<svg class="ic" style="left:999.15px;top:1426.95px" width="15.9" height="15.9" viewBox="-7.95 -7.95 15.9 15.9"><circle r="5.14" fill="#fff"/><rect x="-1.46" y="-6.95" width="2.92" height="3.48" rx="0.42" fill="#fff" transform="rotate(22.5)"/><rect x="-1.46" y="-6.95" width="2.92" height="3.48" rx="0.42" fill="#fff" transform="rotate(67.5)"/><rect x="-1.46" y="-6.95" width="2.92" height="3.48" rx="0.42" fill="#fff" transform="rotate(112.5)"/><rect x="-1.46" y="-6.95" width="2.92" height="3.48" rx="0.42" fill="#fff" transform="rotate(157.5)"/><rect x="-1.46" y="-6.95" width="2.92" height="3.48" rx="0.42" fill="#fff" transform="rotate(202.5)"/><rect x="-1.46" y="-6.95" width="2.92" height="3.48" rx="0.42" fill="#fff" transform="rotate(247.5)"/><rect x="-1.46" y="-6.95" width="2.92" height="3.48" rx="0.42" fill="#fff" transform="rotate(292.5)"/><rect x="-1.46" y="-6.95" width="2.92" height="3.48" rx="0.42" fill="#fff" transform="rotate(337.5)"/><circle r="2" fill="#272a33"/></svg>
<svg class="ic" style="left:1059.9px;top:1420px" width="20" height="44" viewBox="0 0 20 44"><circle cx="10" cy="10" r="4.2" fill="#fff"/><circle cx="10" cy="22" r="4.2" fill="#fff"/><circle cx="10" cy="34" r="4.2" fill="#fff"/></svg>
<!-- dock: 转场动画 -->
<div class="dock" style="left:1548px;top:1050px;width:260px;height:426px;background:#272a33;border:2px solid #3c3f4c;border-top:0;border-radius:0 0 8px 8px;"></div>
<div class="dock-title" style="left:1548px;top:1006px;width:260px;height:50px;background:#3c3f4c;border-radius:8px 8px 0 0;"></div>
<svg class="ic" style="left:1552.6px;top:1016.4px" width="30.6" height="30.6" viewBox="0 0 30.6 30.6"><rect x="1" y="1" width="19" height="15.2" fill="#3c3f4c" stroke="#fff" stroke-width="2"/><rect x="0" y="0" width="21" height="5" fill="#fff"/><rect x="10.3" y="14" width="19" height="15.4" fill="#3c3f4c" stroke="#fff" stroke-width="2"/><rect x="9.3" y="13" width="21" height="5" fill="#fff"/></svg>
<svg class="cj" role="img" aria-label="转场动画" style="left:1591px;top:1020px" width="93" height="24" viewBox="0 0 93 24"><text x="0.5" y="21.1" font-size="23" font-weight="700" fill="#ffffff">转场动画</text></svg>
<div style="left:1558px;top:1068px;width:240px;height:72px;background:#3c3f4c;border-radius:9px;"></div>
<div style="left:1742px;top:1070px;width:2px;height:68px;background:#272a33;"></div>
<svg class="cj" role="img" aria-label="淡入淡出" style="left:1575px;top:1092px" width="93" height="25" viewBox="0 0 93 25"><text x="0.8" y="21.8" font-size="23.1" fill="#ffffff">淡入淡出</text></svg>
<svg class="ic" style="left:1761px;top:1099.4px" width="20" height="10.4" viewBox="0 0 20 10.4"><path d="M0 0H20L10 10.4Z" fill="#fff"/></svg>
<svg class="cj" role="img" aria-label="时长" style="left:1557px;top:1172px" width="47" height="24" viewBox="0 0 47 24"><text x="0.8" y="21.3" font-size="23" fill="#ffffff">时长</text></svg>
<div style="left:1612px;top:1148px;width:186px;height:72px;background:#3c3f4c;border-radius:9px;"></div>
<div style="left:1742px;top:1150px;width:2px;height:68px;background:#272a33;"></div>
<div style="left:1744px;top:1183.6px;width:52px;height:2px;background:#272a33;"></div>
<span class="t" style="top:1173.09px;font-size:24.7px;color:#ffffff;left:1634.2px;">300 ms</span>
<svg class="ic" style="left:1750.2px;top:1152.2px" width="40" height="28" viewBox="-20 -14 40 28"><path d="M-8.75 4.4 L0 -4.4 L8.75 4.4" fill="none" stroke="#fff" stroke-width="3.2" stroke-linecap="round" stroke-linejoin="miter"/></svg>
<svg class="ic" style="left:1750.2px;top:1188.2px" width="40" height="28" viewBox="-20 -14 40 28"><path d="M-8.75 -4.4 L0 4.4 L8.75 -4.4" fill="none" stroke="#fff" stroke-width="3.2" stroke-linecap="round" stroke-linejoin="miter"/></svg>
<div style="left:1626px;top:1224px;width:52px;height:64px;background:#3c3f4c;border-radius:9px;"></div>
<div style="left:1637.8px;top:1253.6px;width:28.4px;height:4.4px;background:#fff;"></div>
<div style="left:1649.8px;top:1241.6px;width:4.4px;height:28.4px;background:#fff;"></div>
<svg class="ic" style="left:1697.5px;top:1240px" width="30.2" height="31.2" viewBox="0 0 31 32"><path d="M7.6 2.3 L9.3 0.2 H21.7 L23.4 2.3 H29.6 Q30.6 2.3 30.6 3.3 V4.8 Q30.6 5.8 29.6 5.8 H1.4 Q0.4 5.8 0.4 4.8 V3.3 Q0.4 2.3 1.4 2.3 Z" fill="#8b8c95"/><path d="M4.4 8.2 V23.6 Q4.4 29.8 10.6 29.8 H20.4 Q26.6 29.8 26.6 23.6 V8.2" fill="none" stroke="#8b8c95" stroke-width="4.4"/><rect x="10.4" y="9.8" width="2" height="14.2" fill="#8b8c95"/><rect x="14.5" y="9.8" width="2" height="14.2" fill="#8b8c95"/><rect x="18.6" y="9.8" width="2" height="14.2" fill="#8b8c95"/></svg>
<svg class="ic" style="left:1761.7px;top:1234px" width="20" height="44" viewBox="0 0 20 44"><circle cx="10" cy="10" r="4.2" fill="#8b8c95"/><circle cx="10" cy="22" r="4.2" fill="#8b8c95"/><circle cx="10" cy="34" r="4.2" fill="#8b8c95"/></svg>
<!-- dock: 控制按钮 -->
<div class="dock" style="left:1816px;top:1050px;width:416px;height:426px;background:#272a33;border:2px solid #3c3f4c;border-top:0;border-radius:0 0 8px 8px;"></div>
<div class="dock-title" style="left:1816px;top:1006px;width:416px;height:50px;background:#3c3f4c;border-radius:8px 8px 0 0;"></div>
<svg class="ic" style="left:1820.6px;top:1016.4px" width="30.6" height="30.6" viewBox="0 0 30.6 30.6"><rect x="1" y="1" width="19" height="15.2" fill="#3c3f4c" stroke="#fff" stroke-width="2"/><rect x="0" y="0" width="21" height="5" fill="#fff"/><rect x="10.3" y="14" width="19" height="15.4" fill="#3c3f4c" stroke="#fff" stroke-width="2"/><rect x="9.3" y="13" width="21" height="5" fill="#fff"/></svg>
<svg class="cj" role="img" aria-label="控制按钮" style="left:1859px;top:1019px" width="94" height="25" viewBox="0 0 94 25"><text x="0.5" y="22" font-size="23.2" font-weight="700" fill="#ffffff">控制按钮</text></svg>
<div style="left:1830px;top:1068px;width:388px;height:72px;background:#3c3f4c;border-radius:9px;"></div>
<svg class="cj" role="img" aria-label="开始直播" style="left:1977px;top:1092px" width="94" height="25" viewBox="0 0 94 25"><text x="0.8" y="21.9" font-size="23.2" fill="#ffffff">开始直播</text></svg>
<div style="left:1830px;top:1148px;width:388px;height:72px;background:#3c3f4c;border-radius:9px;"></div>
<svg class="cj" role="img" aria-label="开始录制" style="left:1977px;top:1172px" width="93" height="25" viewBox="0 0 93 25"><text x="0.8" y="21.9" font-size="23.2" fill="#ffffff">开始录制</text></svg>
<div style="left:1830px;top:1228px;width:308px;height:72px;background:#3c3f4c;border-radius:9px;"></div>
<svg class="cj" role="img" aria-label="启动虚拟摄像机" style="left:1902px;top:1252px" width="163" height="25" viewBox="0 0 163 25"><text x="1" y="21.7" font-size="23.1" fill="#ffffff">启动虚拟摄像机</text></svg>
<div style="left:2146px;top:1228px;width:72px;height:72px;background:#3c3f4c;border-radius:9px;"></div>
<svg class="ic" style="left:2166.6px;top:1248.7px" width="30.4" height="30.4" viewBox="-15.2 -15.2 30.4 30.4"><path d="M-3.12 -9.05 L-1.66 -12.59 L1.66 -12.59 L3.12 -9.05 L4.2 -8.61 L7.73 -10.08 L10.08 -7.73 L8.61 -4.2 L9.05 -3.12 L12.59 -1.66 L12.59 1.66 L9.05 3.12 L8.61 4.2 L10.08 7.73 L7.73 10.08 L4.2 8.61 L3.12 9.05 L1.66 12.59 L-1.66 12.59 L-3.12 9.05 L-4.2 8.61 L-7.73 10.08 L-10.08 7.73 L-8.61 4.2 L-9.05 3.12 L-12.59 1.66 L-12.59 -1.66 L-9.05 -3.12 L-8.61 -4.2 L-10.08 -7.73 L-7.73 -10.08 L-4.2 -8.61Z" fill="#fff" stroke="#fff" stroke-width="3.0" stroke-linejoin="round"/><circle r="6" fill="#3c3f4c"/></svg>
<div style="left:1830px;top:1308px;width:388px;height:72px;background:#3c3f4c;border-radius:9px;"></div>
<svg class="cj" role="img" aria-label="工作室模式" style="left:1966px;top:1332px" width="116" height="25" viewBox="0 0 116 25"><text x="0.5" y="21.8" font-size="23" fill="#ffffff">工作室模式</text></svg>
<div style="left:1830px;top:1388px;width:388px;height:72px;background:#3c3f4c;border-radius:9px;"></div>
<svg class="cj" role="img" aria-label="设置" style="left:2000px;top:1413px" width="47" height="24" viewBox="0 0 47 24"><text x="0.8" y="20.7" font-size="23" fill="#ffffff">设置</text></svg>
<!-- status bar -->
<div class="statusbar" style="left:60px;top:1484px;width:2172px;height:59px;background:#272a33;border-top:2px solid #3c3f4c;border-radius:0 0 20px 20px;"></div>
<div style="left:1416px;top:1482px;width:1.6px;height:61px;background:#3c3f4c;"></div>
<div style="left:1478px;top:1482px;width:1.6px;height:61px;background:#3c3f4c;"></div>
<div style="left:1656.4px;top:1482px;width:1.6px;height:61px;background:#3c3f4c;"></div>
<div style="left:1834.6px;top:1482px;width:1.6px;height:61px;background:#3c3f4c;"></div>
<div style="left:1978.2px;top:1482px;width:1.6px;height:61px;background:#3c3f4c;"></div>
<div style="left:1432px;top:1518px;width:6px;height:10px;background:#5b5c65;border-radius:1.5px;"></div>
<div style="left:1440px;top:1512px;width:6px;height:16px;background:#5b5c65;border-radius:1.5px;"></div>
<div style="left:1448px;top:1506px;width:6px;height:22px;background:#5b5c65;border-radius:1.5px;"></div>
<div style="left:1456px;top:1500px;width:6px;height:28px;background:#5b5c65;border-radius:1.5px;"></div>
<svg class="ic" style="left:1493px;top:1501.2px" width="34" height="26" viewBox="0 0 34 26"><circle cx="17" cy="13" r="5.4" fill="#8e8f98"/><path d="M10.6 6.6 Q6.2 13 10.6 19.4 M23.4 6.6 Q27.8 13 23.4 19.4" fill="none" stroke="#4a4c57" stroke-width="2.7" stroke-linecap="round"/><path d="M5.6 2.8 Q-0.6 13 5.6 23.2 M28.4 2.8 Q34.6 13 28.4 23.2" fill="none" stroke="#3f414c" stroke-width="2.7" stroke-linecap="round"/></svg>
<span class="t" style="top:1503.79px;font-size:23.4px;color:#9a9ba4;letter-spacing:0.5px;left:1545.4px;">00:00:00</span>
<div style="left:1674px;top:1500.2px;width:27.6px;height:27.6px;background:#5b5c65;border-radius:50%;"></div>
<span class="t" style="top:1503.79px;font-size:23.4px;color:#9a9ba4;letter-spacing:0.5px;left:1723.4px;">00:00:00</span>
<span class="t" style="top:1504.02px;font-size:23.6px;color:#ffffff;letter-spacing:-0.55px;left:1849.4px;">CPU: 2.5%</span>
<span class="t" style="top:1504.02px;font-size:23.6px;color:#ffffff;left:1993.4px;">60.00 / 60.00 FPS</span>
<div style="left:60px;top:30px;width:2172px;height:1513px;border-radius:20px;box-shadow:inset 0 0 0 1.8px rgba(255,255,255,.23);pointer-events:none;"></div>
</div>
</body></html>
